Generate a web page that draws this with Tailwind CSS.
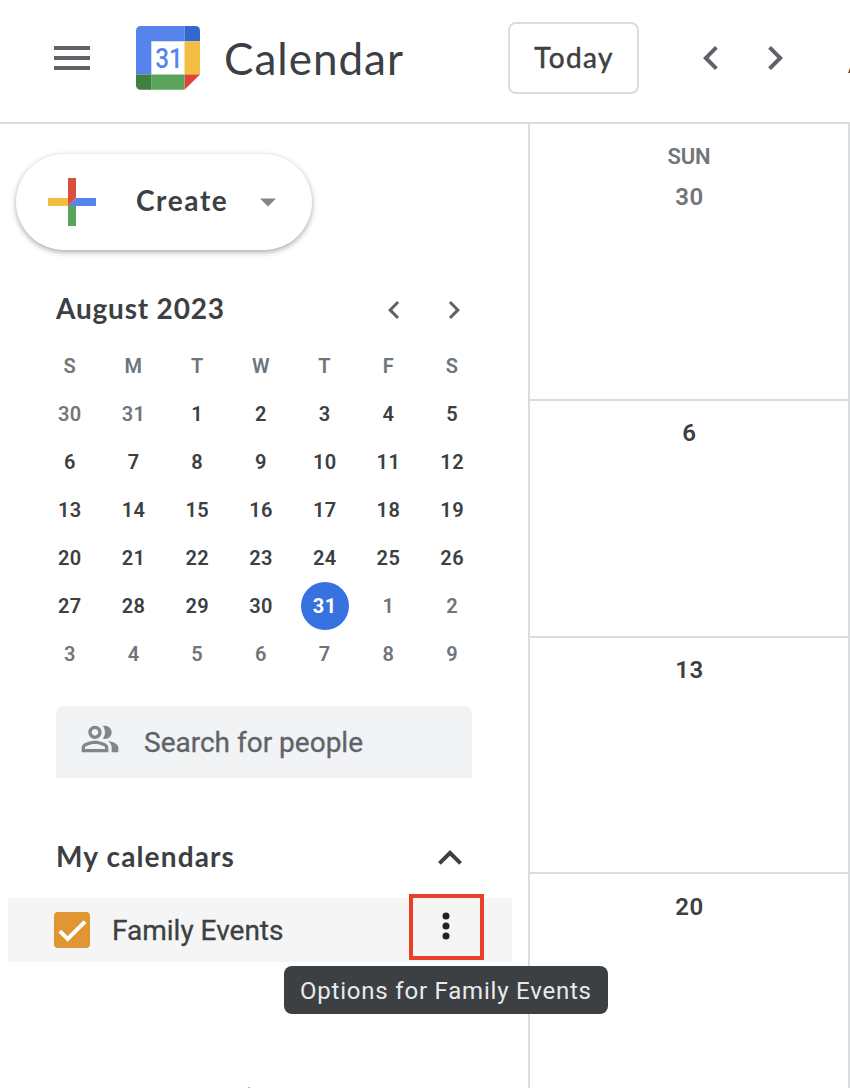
<!DOCTYPE html>
<html lang="en">
<head>
<meta charset="utf-8">
<title>Calendar</title>
<script src="https://cdn.jsdelivr.net/npm/@tailwindcss/browser@4"></script>
</head>
<body class="bg-white">
<div class="relative flex h-[1088px] w-[850px] flex-col overflow-hidden bg-white font-['Roboto',sans-serif] text-[#3c4043]">
  <header class="flex h-[124px] shrink-0 items-start overflow-hidden border-b-2 border-[#dadce0] pl-[54px]">
    <svg class="mt-[46px] h-6 w-9 shrink-0" viewBox="0 0 36 24" fill="#5f6368"><path d="M0 0h36v4H0zM0 10h36v4H0zM0 20h36v4H0z"/></svg>
    <svg class="mt-[26px] ml-[46px] size-16 shrink-0" viewBox="0 0 64 64">
      <path fill="#5684ec" d="M4.500 0H48.500V15.300H15.300V48.500H0V4.500A4.500 4.500 0 0 1 4.500 0z"/>
      <path fill="#3367d0" d="M48.500 0H59.500A4.500 4.500 0 0 1 64 4.500V15.300H48.500z"/>
      <path fill="#f1be42" d="M48.500 15.300H64V48.500H48.500z"/>
      <path fill="#e44235" d="M48.500 48.500H64L48.500 63.800z"/>
      <path fill="#5ba45b" d="M15.300 48.500H48.500V63.800H15.300z"/>
      <path fill="#3f7f42" d="M0 48.500H15.300V63.800H4.500A4.500 4.500 0 0 1 0 59.300z"/>
      <text x="19.300" y="42" textLength="27.500" lengthAdjust="spacingAndGlyphs" font-family="Roboto" font-size="27.500" font-weight="500" fill="#5684ec">31</text>
    </svg>
    <span class="mt-[28px] ml-[24px] w-[284px] shrink-0 font-['Lato'] text-[44px] leading-[60px] tracking-[1px]">Calendar</span>
    <button class="mt-[22px] h-[72px] w-[131px] shrink-0 rounded-lg border-2 border-[#dadce0] pl-px font-['Lato'] text-[28px] leading-[66px] tracking-[1.4px] [-webkit-text-stroke:0.5px_#3c4043]"><span class="block h-[68px]">Today</span></button>
    <div class="mt-[34px] ml-12 flex shrink-0 gap-4">
      <svg class="size-12" viewBox="0 0 24 24" fill="#5f6368"><path d="M15.410 7.410L14 6l-6 6 6 6 1.410-1.410L10.830 12z"/></svg>
      <svg class="size-12" viewBox="0 0 24 24" fill="#5f6368"><path d="M10 6L8.590 7.410 13.170 12l-4.580 4.590L10 18l6-6z"/></svg>
    </div>
    <span class="mt-[26px] ml-[49px] shrink-0 font-['Lato'] text-[44px] leading-[60px] whitespace-nowrap">August 2023</span>
  </header>

  <main class="flex min-h-0 flex-1">
    <aside class="flex w-[528px] shrink-0 flex-col">
      <button class="mt-[30px] ml-4 flex h-24 w-[296px] shrink-0 items-center rounded-full bg-white pl-8 shadow-[0_2px_4px_0_rgba(60,64,67,0.302),0_2px_6px_1px_rgba(60,64,67,0.15)]">
        <svg class="size-12" viewBox="6 6 24 24"><path fill="#5ba45b" d="M16 16v14h4V20z"/><path fill="#5684ec" d="M30 16H20l-4 4h14z"/><path fill="#f1be42" d="M6 16v4h10l4-4z"/><path fill="#d9503f" d="M20 16V6h-4v14z"/></svg>
        <span class="mb-1 ml-10 w-[124px] text-left font-['Lato'] text-[28px] leading-10 font-bold tracking-[1.6px]">Create</span>
        <svg class="h-[9px] w-4" viewBox="0 0 16 9" fill="#80868b"><path d="M0 .5h16l-8 8z"/></svg>
      </button>

      <div class="mt-[42px] flex h-9 shrink-0 items-center pl-14">
        <span class="mb-1 w-[320px] font-['Lato'] text-[28px] leading-9 font-bold tracking-[0.8px]">August 2023</span>
        <svg class="size-9" viewBox="0 0 24 24" fill="#5f6368"><path d="M15.410 7.410L14 6l-6 6 6 6 1.410-1.410L10.830 12z"/></svg>
        <svg class="ml-6 size-9" viewBox="0 0 24 24" fill="#5f6368"><path d="M10 6L8.590 7.410 13.170 12l-4.580 4.590L10 18l6-6z"/></svg>
      </div>

      <div class="mt-[14px] ml-[38px] grid w-[446px] shrink-0 auto-rows-[48px] grid-cols-7 place-items-center text-[20px] font-semibold tracking-[0.4px]">
        <span class="text-[#70757a]">S</span><span class="text-[#70757a]">M</span><span class="text-[#70757a]">T</span><span class="text-[#70757a]">W</span><span class="text-[#70757a]">T</span><span class="text-[#70757a]">F</span><span class="text-[#70757a]">S</span>
        <span class="text-[#70757a]">30</span><span class="text-[#70757a]">31</span><span>1</span><span>2</span><span>3</span><span>4</span><span>5</span>
        <span>6</span><span>7</span><span>8</span><span>9</span><span>10</span><span>11</span><span>12</span>
        <span>13</span><span>14</span><span>15</span><span>16</span><span>17</span><span>18</span><span>19</span>
        <span>20</span><span>21</span><span>22</span><span>23</span><span>24</span><span>25</span><span>26</span>
        <span>27</span><span>28</span><span>29</span><span>30</span><span class="flex size-12 items-center justify-center rounded-full bg-[#3871e0] font-bold text-white">31</span><span class="text-[#70757a]">1</span><span class="text-[#70757a]">2</span>
        <span class="text-[#70757a]">3</span><span class="text-[#70757a]">4</span><span class="text-[#70757a]">5</span><span class="text-[#70757a]">6</span><span class="text-[#70757a]">7</span><span class="text-[#70757a]">8</span><span class="text-[#70757a]">9</span>
      </div>

      <div class="mt-7 ml-14 flex h-[72px] w-[416px] shrink-0 items-center rounded-t-lg bg-[#f1f3f4] pl-6 text-[#5f6368]">
        <svg class="mb-[6px] size-10" viewBox="0 0 24 24" fill="#80868b"><path d="M16.670 13.130C18.040 14.060 19 15.320 19 17v3h4v-3c0-2.180-3.570-3.470-6.330-3.870zM15 12c2.210 0 4-1.790 4-4s-1.790-4-4-4c-.47 0-.91.1-1.330.24C14.500 5.270 15 6.580 15 8s-.5 2.730-1.330 3.760c.42.14.86.24 1.330.24zM9 12c2.210 0 4-1.790 4-4s-1.790-4-4-4-4 1.790-4 4 1.790 4 4 4zm0-6c1.100 0 2 .9 2 2s-.9 2-2 2-2-.9-2-2 .9-2 2-2zM9 13c-2.670 0-8 1.340-8 4v3h16v-3c0-2.660-5.330-4-8-4zm6 5H3v-.99C3.200 16.290 6.300 15 9 15s5.800 1.290 6 2v1z"/></svg>
        <span class="mt-[2px] ml-6 text-[28px] leading-10 [-webkit-text-stroke:0.3px_#5f6368]">Search for people</span>
      </div>

      <div class="mt-14 flex h-12 shrink-0 items-center pl-14">
        <span class="mb-1 w-[370px] font-['Lato'] text-[28px] leading-10 font-bold tracking-[1.15px]">My calendars</span>
        <svg class="size-12" viewBox="0 0 24 24" fill="#3c4043"><path d="M12 8l-6 6 1.410 1.410L12 10.830l4.590 4.580L18 14z"/></svg>
      </div>

      <div class="mt-4 ml-2 flex h-16 w-[504px] shrink-0 items-center bg-[#f5f5f5] pl-[46px]">
        <svg class="size-9" viewBox="0 0 36 36"><rect width="36" height="36" rx="4" fill="#e09633"/><path d="M5.800 19.200L13.700 27 31 9.600" fill="none" stroke="#fff" stroke-width="4"/></svg>
        <span class="mt-[2px] ml-[22px] w-[297px] text-[28px] leading-10 [-webkit-text-stroke:0.3px_#3c4043]">Family Events</span>
        <span class="-mt-[6px] flex h-[66px] w-[75px] items-center justify-center border-4 border-[#e94126] pr-[1px] pb-[2px]">
          <svg class="h-7 w-2" viewBox="0 0 8 28" fill="#202124"><circle cx="4" cy="4" r="3.500"/><circle cx="4" cy="14" r="3.500"/><circle cx="4" cy="24" r="3.500"/></svg>
        </span>
      </div>
    </aside>

    <section class="grid w-[322px] shrink-0 grid-rows-[277px_237px_236px_1fr] border-x-2 border-[#dadce0] text-center text-[24px] leading-7 font-semibold tracking-[0.6px]">
      <div class="flex flex-col border-b-2 border-[#dadce0] pt-[19px] text-[#70757a]">
        <span class="text-[22px] tracking-[-0.2px]">SUN</span><span class="mt-3 pl-px">30</span>
      </div>
      <div class="border-b-2 border-[#dadce0] pt-[18px] pl-px">6</div>
      <div class="border-b-2 border-[#dadce0] pt-[18px] pl-px">13</div>
      <div class="pt-[19px] pl-px">20</div>
    </section>
  </main>

  <div class="absolute top-[966px] left-[284px] flex h-12 w-[324px] items-center rounded-lg bg-[#3c4043] pt-[2px] pl-4 text-[24px] tracking-[0.79px] whitespace-nowrap text-[#e8eaed]">Options for Family Events</div>
  <div class="absolute top-[1087px] left-[248px] h-px w-[2px] bg-[#b8babd]"></div>
</div>
</body>
</html>
